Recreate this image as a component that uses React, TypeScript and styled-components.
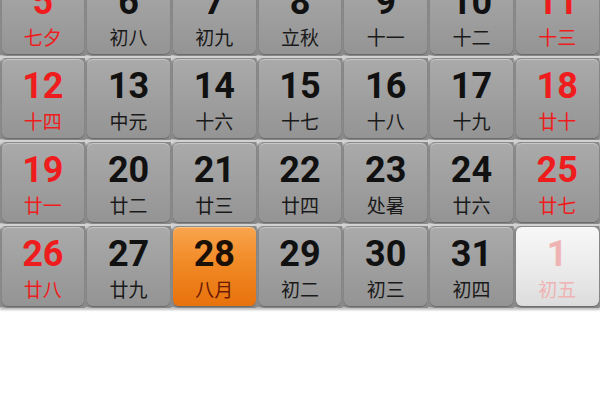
import React from "react";
import styled, { createGlobalStyle, css } from "styled-components";

const Global = createGlobalStyle`
  html, body { margin: 0; padding: 0; background: #ffffff; }
  body { font-family: Roboto, "Noto Sans CJK SC", sans-serif; }
`;

const Viewport = styled.div`
  width: 600px;
  height: 400px;
  overflow: hidden;
  background: #ffffff;
`;

const Grid = styled.div`
  margin-top: -28px;
  display: grid;
  grid-template-columns: repeat(7, 1fr);
  grid-auto-rows: 84px;
  background-color: #8a8a8a;
  background-image: radial-gradient(
    circle at 0 0,
    #ffffff 0,
    rgba(255, 255, 255, 0.9) 2px,
    rgba(255, 255, 255, 0) 7px
  );
  background-size: calc(600px / 7) 84px;
  background-position: -0.5px -0.5px;
  box-shadow: 0 2px 2px rgba(0, 0, 0, 0.25);
`;

type Kind = "normal" | "today" | "other";

const Slot = styled.div`
  border-top: 2px solid #d2d2d2;
  padding: 1px 1.5px 2px;
  display: flex;
`;

const Cell = styled.div<{ $kind: Kind }>`
  flex: 1;
  border-radius: 6px;
  display: flex;
  flex-direction: column;
  align-items: center;
  box-shadow: inset 0 1px 0 rgba(255, 255, 255, 0.35), 0 1px 1px rgba(0, 0, 0, 0.25);
  ${(p) =>
    p.$kind === "today"
      ? css`
          background: linear-gradient(#f9a54e 0%, #f18a26 45%, #e8720c 100%);
        `
      : p.$kind === "other"
      ? css`
          background: linear-gradient(#f7f7f7 0%, #e9e9e9 60%, #dcdcdc 100%);
        `
      : css`
          background: linear-gradient(#aaaaaa 0%, #9f9f9f 50%, #949494 100%);
        `}
`;

const Num = styled.div<{ $color: string }>`
  margin-top: 7px;
  font-family: Roboto, "Liberation Sans", sans-serif;
  font-weight: 700;
  font-size: 36px;
  line-height: 40px;
  color: ${(p) => p.$color};
`;

const Lunar = styled.div<{ $color: string }>`
  margin-top: 3px;
  font-family: "Noto Sans CJK SC", sans-serif;
  font-size: 19px;
  line-height: 24px;
  color: ${(p) => p.$color};
`;

type Day = { n: number; l: string; red?: boolean; kind?: Kind };

const rows: Day[][] = [
  [
    { n: 5, l: "七夕", red: true },
    { n: 6, l: "初八" },
    { n: 7, l: "初九" },
    { n: 8, l: "立秋" },
    { n: 9, l: "十一" },
    { n: 10, l: "十二" },
    { n: 11, l: "十三", red: true },
  ],
  [
    { n: 12, l: "十四", red: true },
    { n: 13, l: "中元" },
    { n: 14, l: "十六" },
    { n: 15, l: "十七" },
    { n: 16, l: "十八" },
    { n: 17, l: "十九" },
    { n: 18, l: "廿十", red: true },
  ],
  [
    { n: 19, l: "廿一", red: true },
    { n: 20, l: "廿二" },
    { n: 21, l: "廿三" },
    { n: 22, l: "廿四" },
    { n: 23, l: "处暑" },
    { n: 24, l: "廿六" },
    { n: 25, l: "廿七", red: true },
  ],
  [
    { n: 26, l: "廿八", red: true },
    { n: 27, l: "廿九" },
    { n: 28, l: "八月", kind: "today" },
    { n: 29, l: "初二" },
    { n: 30, l: "初三" },
    { n: 31, l: "初四" },
    { n: 1, l: "初五", red: true, kind: "other" },
  ],
];

function colors(d: Day): [string, string] {
  if (d.kind === "other") return ["#efb3b3", "#efb3b3"];
  if (d.kind === "today") return ["#1a1006", "#6a1a05"];
  if (d.red) return ["#ee1c1c", "#ee1c1c"];
  return ["#111111", "#1a1a1a"];
}

export default function App() {
  return (
    <Viewport>
      <Global />
      <Grid>
        {rows.flat().map((d, i) => {
          const [nc, lc] = colors(d);
          return (
            <Slot key={i}>
              <Cell $kind={d.kind ?? "normal"}>
                <Num $color={nc}>{d.n}</Num>
                <Lunar $color={lc}>{d.l}</Lunar>
              </Cell>
            </Slot>
          );
        })}
      </Grid>
    </Viewport>
  );
}
